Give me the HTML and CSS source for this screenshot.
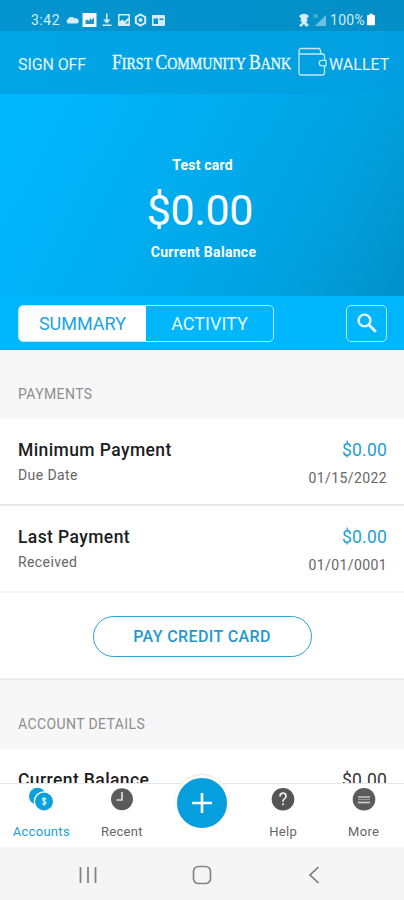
FILE: index.html
```html
<!DOCTYPE html>
<html lang="en">
<head>
<meta charset="utf-8">
<title>First Community Bank</title>
<link rel="stylesheet" href="styles.css">
</head>
<body>
<div class="phone">
  <div class="status">
    <span class="time">3:42</span>
    <svg class="status-icons" width="100" height="16" viewBox="0 0 100 16" fill="#d5edf8">
      <path d="M3 11.500a2.500 2.500 0 0 1 0-4.500 4 3.500 0 0 1 7-.5 2.500 2.500 0 0 1 2 5z"/>
      <path d="M17.500 1h14v14h-14z" fill="#f2fafe"/><path d="M20.500 12V8.500l2-1 1.500 1.500 1.500-3 1 2L29 5.500V12z" fill="#2393c8"/>
      <path d="M41 1.500h1.500v6h3l-3.700 4-3.800-4h3zM37.500 12.500h9V14h-9z"/>
      <path fill-rule="evenodd" d="M53 2h12v12H53zm1.500 1.500v6l3-2 2 2 4-4v-2zM56 11.500h7.500V8.500l-3.500 3z"/>
      <path fill="none" stroke="#d5edf8" stroke-width="2" d="M75.500 2.500l4.700 2.700v5.600l-4.700 2.700-4.700-2.700V5.200z"/><circle cx="75.500" cy="8" r="2"/>
      <path fill-rule="evenodd" d="M88 3h11q1 0 1 1v9q0 1-1 1H88q-1 0-1-1V4q0-1 1-1zm.5 3.500v5.500H93V6.500zm6 0v1.500h4V6.500z"/>
    </svg>
    <svg class="signal" width="29" height="16" viewBox="0 0 29 16" fill="#d5edf8">
      <path d="M1 4Q6-.500 11 4L8.500 7 10 8.500 8 10l3 3-3 2-2-3-3 3-2-2 2-1 1-2-2-1.500L3.500 7z"/>
      <path d="M28 3v11H17z" fill="#6cc0e4"/><path d="M15.500 2l4 4m0-4l-4 4" stroke="#8acbea"/>
    </svg>
    <span class="percent">100%</span>
    <svg class="battery" width="8" height="13" viewBox="0 0 9 13"><path d="M2.500 0h4v1.500H8q1 0 1 1V12q0 1-1 1H1q-1 0-1-1V2.500q0-1 1-1h1.500z" fill="#fff"/></svg>
  </div>
  <header class="header">
    <span class="signoff">SIGN OFF</span>
    <div class="brand"><span class="brand-text">F<span class="sc">IRST </span>C<span class="sc">OMMUNITY </span>B<span class="sc">ANK</span></span></div>
    <svg class="wallet-icon" width="30" height="30" viewBox="0 0 30 30" fill="none" stroke="#c4e8fa" stroke-width="1.300">
      <path d="M26.500 13V9q0-2-2-2H3Q1 7 1 4.500 1 1.500 3 1.500h17.500q1.500 0 2 2L23 7M1 4.500V25.500q0 2.500 2 2.500h21.500q2 0 2-2V19"/>
      <path d="M28 13.300H24a2.800 2.800 0 0 0 0 5.600h4z"/>
    </svg>
    <span class="wallet">WALLET</span>
  </header>
  <section class="hero">
    <div class="card-name">Test card</div>
    <div class="amount">$0.00</div>
    <div class="card-name balance">Current Balance</div>
  </section>
  <div class="tabs">
    <div class="segmented">
      <div class="tab active">SUMMARY</div>
      <div class="tab">ACTIVITY</div>
    </div>
    <div class="search">
      <svg width="20" height="20" viewBox="0 0 20 20" fill="none" stroke="#e9f8ff" stroke-width="2.400"><circle cx="7.500" cy="7.500" r="5.900"/><path d="M11.800 11.800l7 7" stroke-width="2.800"/></svg>
    </div>
  </div>
  <main class="content">
    <h2 class="section">PAYMENTS</h2>
    <div class="row">
      <div><div class="name">Minimum Payment</div><div class="sub">Due Date</div></div>
      <div class="right"><div class="value">$0.00</div><div class="date">01/15/2022</div></div>
    </div>
    <div class="row last">
      <div><div class="name">Last Payment</div><div class="sub">Received</div></div>
      <div class="right"><div class="value">$0.00</div><div class="date">01/01/0001</div></div>
    </div>
    <div class="pay"><div class="button">PAY CREDIT CARD</div></div>
    <h2 class="section details">ACCOUNT DETAILS</h2>
    <div class="row">
      <div class="name">Current Balance</div>
      <div class="value dark">$0.00</div>
    </div>
  </main>
  <nav class="bottom">
    <div class="item on">
      <svg width="26" height="26" viewBox="0 0 26 26"><circle cx="9.500" cy="9.300" r="8.500" fill="#0ba0dc"/><circle cx="16" cy="14.500" r="10.300" fill="#fff"/><circle cx="16" cy="14.500" r="9" fill="#0ba0dc"/><path d="M18.300 12q-3.800-1.800-3.800.500c0 1.700 3.500 1.300 3.500 3.200 0 1.800-2.500 1.800-4 .8M16.200 10v9" fill="none" stroke="#d8f1fb" stroke-width="1.200"/></svg>
      <span>Accounts</span>
    </div>
    <div class="item">
      <svg width="26" height="26" viewBox="0 0 26 26"><circle cx="13" cy="12.300" r="11" fill="#5b5b5b"/><path d="M13 5v8H7.500" fill="none" stroke="#ddd" stroke-width="1.700"/></svg>
      <span>Recent</span>
    </div>
    <div class="item plus-slot">
      <div class="plus"><svg width="20" height="20" viewBox="0 0 20 20"><path d="M10 0v20M0 10h20" stroke="#fff" stroke-width="2.600"/></svg></div>
    </div>
    <div class="item">
      <svg width="26" height="26" viewBox="0 0 26 26"><circle cx="13" cy="12.300" r="11.300" fill="#555"/><path d="M10 9.500q0-3.300 3-3.300t3 2.900q0 1.700-1.600 2.800-1.400.9-1.400 2.800m0 1.500v2" fill="none" stroke="#eee" stroke-width="1.700"/></svg>
      <span>Help</span>
    </div>
    <div class="item">
      <svg width="26" height="26" viewBox="0 0 26 26"><circle cx="13" cy="12.300" r="11.300" fill="#5b5b5b"/><path d="M7 10h12" stroke="#bbb" stroke-width="1.700"/><path d="M7 12.500h12" stroke="#999" stroke-width="1.200"/><path d="M7 15.500h12" stroke="#ccc" stroke-width="1.700"/></svg>
      <span>More</span>
    </div>
  </nav>
  <div class="system">
    <svg width="20" height="18" viewBox="0 0 20 18"><path d="M2.500 1v16M10 1v16M17.500 1v16" stroke="#858585" stroke-width="1.800"/></svg>
    <svg width="20" height="20" viewBox="0 0 20 20"><rect x="1.500" y="1.500" width="17" height="17" rx="5" fill="none" stroke="#858585" stroke-width="1.700"/></svg>
    <svg class="back" width="12" height="18" viewBox="0 0 12 18"><path d="M10.500 1L2 9l8.500 8" fill="none" stroke="#777" stroke-width="1.600"/></svg>
  </div>
</div>
</body>
</html>
```

FILE: styles.css
```css
* { box-sizing: border-box; }
body { margin: 0; font-family: Roboto, sans-serif; background: #f7f7f7; }
.phone { width: 404px; height: 900px; overflow: hidden; display: flex; flex-direction: column; }
svg { display: block; flex: none; }

.status { height: 31px; flex: none; display: flex; align-items: center; padding: 8px 29px 0 31px; color: #d5edf8; background: linear-gradient(90deg, #0495d0, #038ec6); font-size: 14px; }
.time { width: 34px; letter-spacing: 0.5px; }
.signal { margin-left: auto; margin-right: 3px; }
.percent { width: 36px; white-space: nowrap; letter-spacing: 0.3px; }
.battery { margin-left: 1px; }

.header { height: 63px; flex: none; display: flex; align-items: center; padding: 0 14px 2px 18px; color: #e4f5fd; font-size: 16px; background: linear-gradient(100deg, #02a5e6, #019fdf); }
.signoff { width: 94px; flex: none; padding-top: 5px; letter-spacing: -0.1px; }
.brand { width: 182px; flex: none; padding-top: 2px; white-space: nowrap; color: #f2fbff; font-family: "Liberation Serif", serif; font-size: 20px; line-height: 24px; -webkit-text-stroke: 0.3px #f2fbff; }
.brand-text { display: inline-block; transform: scaleX(0.878); transform-origin: left; }
.sc { font-size: 16px; }
.wallet-icon { margin-left: 4px; }
.wallet { padding-top: 5px; letter-spacing: 0; margin-left: 1px; }

.hero { height: 202px; flex: none; padding-top: 62px; text-align: center; color: #fff; background: linear-gradient(118deg, #00b7fe 5%, #01a9ea 55%, #019fdc 78%, #0290c8 100%); }
.card-name { font-size: 14px; line-height: 18px; font-weight: 700; letter-spacing: 0.2px; padding-left: 1px; }
.amount { font-size: 43px; line-height: 56px; margin: 8px 0 5px; padding-right: 4px; letter-spacing: -0.3px; }
.balance { padding-left: 3px; letter-spacing: 0.3px; }

.tabs { height: 54px; flex: none; display: flex; justify-content: space-between; align-items: flex-start; padding: 9px 17px 0 18px; background: #00b7fd; }
.segmented { width: 256px; height: 37px; display: flex; border: 1.500px solid #b3eaff; border-radius: 5px; overflow: hidden; }
.tab { flex: 1; display: flex; align-items: center; justify-content: center; color: #e5f7ff; font-size: 18px; }
.active { background: #fff; color: #18a5e0; }
.search { width: 41px; height: 37px; display: flex; align-items: center; justify-content: center; border: 1.500px solid #b3eaff; border-radius: 5px; padding-bottom: 2px; }

.content { height: 433px; flex: none; overflow: hidden; background: #fff; }
.section { height: 69px; margin: 0; padding: 35px 18px 0; font-size: 14px; line-height: 18px; font-weight: 400; letter-spacing: 0.4px; color: #8e8e8e; background: #f7f7f7; }
.row { height: 87px; display: flex; justify-content: space-between; padding: 19px 17px 0 18px; border-bottom: 2px solid #e8e8e8; }
.last { border-bottom-color: #f3f3f3; }
.name { font-size: 17.500px; line-height: 24px; font-weight: 500; letter-spacing: 0.4px; color: #1d1d1d; }
.sub { font-size: 14px; line-height: 20px; margin-top: 3px; letter-spacing: 0.4px; color: #666; }
.right { text-align: right; }
.value { font-size: 17.500px; line-height: 24px; letter-spacing: 0.2px; color: #239fd4; }
.date { font-size: 14px; line-height: 20px; margin-top: 6px; letter-spacing: 0.4px; color: #666; }
.pay { height: 87px; padding-top: 23px; border-bottom: 2px solid #ededed; }
.button { width: 219px; height: 41px; margin: 0 auto; border: 1px solid #2f9fd4; border-radius: 21px; color: #1f9ad1; font-size: 16px; font-weight: 500; line-height: 40px; letter-spacing: 0.4px; text-align: center; }
.details { height: 69px; }
.dark { color: #333; }

.bottom { height: 64px; flex: none; display: flex; padding-left: 1px; border-top: 1px solid #e6e6e6; background: #fff; position: relative; }
.item { flex: 1; display: flex; flex-direction: column; align-items: center; padding-top: 3px; font-size: 13px; color: #666; letter-spacing: 0.3px; }
.item span { margin-top: 11px; }
.on { color: #189fd8; }
.plus { width: 56px; height: 56px; margin-top: -12px; flex: none; border: 3px solid #fff; border-radius: 50%; background: #069fdd; box-shadow: 0 -1px 1px #e3e3e3; display: flex; align-items: center; justify-content: center; }

.system { flex: 1; display: flex; align-items: center; justify-content: space-between; padding: 2px 84px 0 78px; background: #f5f5f5; }
.system svg:nth-child(2) { margin-right: 3px; }
```
